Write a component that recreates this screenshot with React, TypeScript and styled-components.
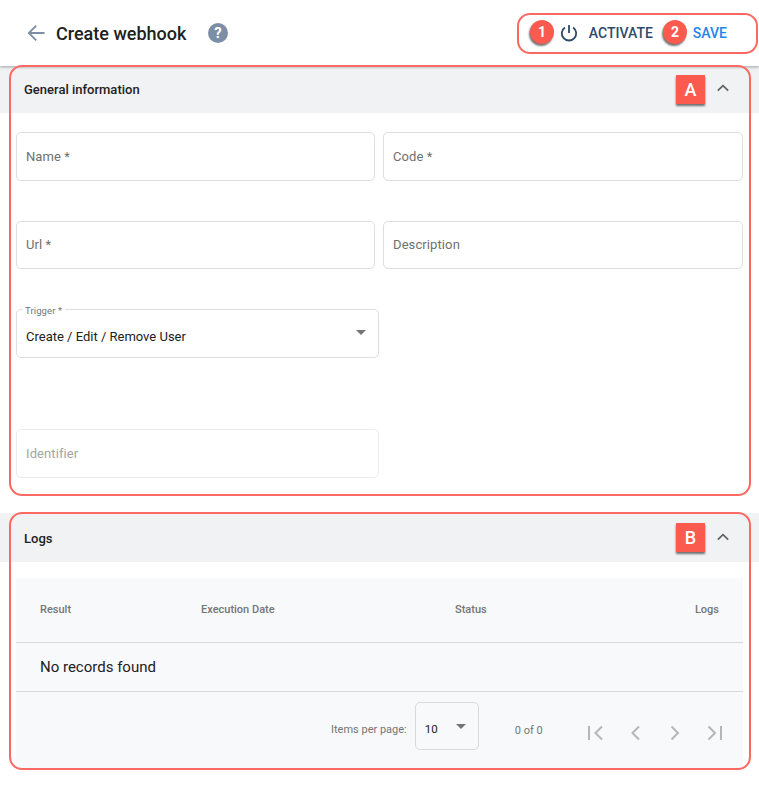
import React from "react";
import styled, { createGlobalStyle } from "styled-components";

const Global = createGlobalStyle`
  html, body { margin: 0; padding: 0; background: #fff; }
  body { font-family: Roboto, "Liberation Sans", sans-serif; }
  * { box-sizing: border-box; }
`;

const Page = styled.div`
  position: relative;
  width: 759px;
  height: 787px;
  overflow: hidden;
`;

const Header = styled.header`
  height: 66px;
  display: flex;
  align-items: center;
  padding: 0 0 0 26px;
  position: relative;
  box-shadow: 0 1px 3px rgba(0, 0, 0, 0.35);
  background: #fff;
  z-index: 1;
`;

const BackIcon = styled.svg`
  width: 20px;
  height: 20px;
  margin-right: 10px;
`;

const Title = styled.h1`
  margin: 0;
  font-size: 18px;
  font-weight: 500;
  color: #212121;
`;

const Help = styled.svg`
  width: 22px;
  height: 22px;
  margin-left: 21px;
`;

const Actions = styled.div`
  margin-left: auto;
  display: flex;
  align-items: center;
  height: 40px;
  padding-right: 32px;
`;

const PowerIcon = styled.svg`
  width: 20px;
  height: 20px;
  margin-right: 10px;
`;

const ActionButton = styled.span<{ $color: string; $gap?: number }>`
  font-size: 14px;
  font-weight: 500;
  color: ${(p) => p.$color};
  margin-left: ${(p) => p.$gap ?? 0}px;
`;

const Panel = styled.section<{ $gap?: number }>`
  margin-top: ${(p) => p.$gap ?? 0}px;
`;

const PanelHead = styled.div<{ $h: number; $pad: string }>`
  height: ${(p) => p.$h}px;
  background: #f1f2f4;
  display: flex;
  align-items: center;
  justify-content: space-between;
  padding: ${(p) => p.$pad};
  font-size: 13px;
  font-weight: 500;
  color: #212121;
`;

const Chevron = styled.svg`
  width: 18px;
  height: 18px;
  margin-top: -2px;
`;

const FormBody = styled.div`
  padding: 19px 16px 0;
`;

const Grid = styled.div`
  display: grid;
  grid-template-columns: 359px 360px;
  column-gap: 8px;
  row-gap: 40px;
`;

const Field = styled.div<{ $disabled?: boolean; $wide?: boolean; $top?: number }>`
  position: relative;
  height: 48.5px;
  width: ${(p) => (p.$wide ? "363px" : "auto")};
  margin-top: ${(p) => p.$top ?? 0}px;
  border: 1px solid ${(p) => (p.$disabled ? "#ececec" : "#dedede")};
  border-radius: 5px;
  display: flex;
  align-items: center;
  padding: 0 9px;
  font-size: 13px;
  letter-spacing: 0.1px;
  color: ${(p) => (p.$disabled ? "#a4a4a4" : "#6f6f6f")};
  background: #fff;
`;

const FloatLabel = styled.span`
  position: absolute;
  left: 5px;
  top: -5px;
  padding: 0 3px;
  background: #fff;
  font-size: 9.5px;
  line-height: 11px;
  color: #757575;
`;

const SelectValue = styled.span`
  color: #212121;
  margin-top: 7px;
  letter-spacing: 0;
`;

const Caret = styled.i`
  position: absolute;
  width: 0;
  height: 0;
  border-left: 5px solid transparent;
  border-right: 5px solid transparent;
  border-top: 5px solid #757575;
`;

const TriggerCaret = styled(Caret)`
  right: 12px;
  top: 20px;
`;

const TableWrap = styled.div`
  margin: 16px 16px 0;
  background: #f8f9fb;
  height: 192px;
`;

const HeadRow = styled.div`
  height: 65px;
  display: grid;
  grid-template-columns: 161px 254px 1fr auto;
  align-items: center;
  padding: 0 24px 2px;
  border-bottom: 1px solid #d8d9dc;
  font-size: 11px;
  font-weight: 500;
  color: #757575;
`;

const EmptyRow = styled.div`
  height: 49px;
  display: flex;
  align-items: center;
  padding: 0 24px;
  border-bottom: 1px solid #d8d9dc;
  font-size: 15px;
  color: #212121;
`;

const Footer = styled.div`
  height: 77px;
  display: flex;
  align-items: center;
  padding-left: 315px;
  font-size: 11px;
  color: #757575;
`;

const PerPage = styled.span`
  margin-right: 8px;
  margin-bottom: 2px;
`;

const PageSelect = styled.div`
  position: relative;
  align-self: flex-start;
  width: 64px;
  height: 48px;
  border: 1px solid #d9d9dc;
  border-radius: 5px;
  display: flex;
  align-items: center;
  padding: 6px 0 0 9px;
  font-size: 11.5px;
  color: #212121;
  margin-top: 10px;
`;

const PageCaret = styled(Caret)`
  left: 40px;
  top: 21px;
`;

const Range = styled.span`
  margin-left: 36px;
  width: 44px;
`;

const Pager = styled.div`
  display: flex;
  align-items: center;
  gap: 16px;
  margin-left: 24px;
  margin-top: 5px;
`;

const PagerIcon = styled.svg`
  width: 24px;
  height: 24px;
`;

const Outline = styled.div<{ $x: number; $y: number; $w: number; $h: number; $r: number }>`
  position: absolute;
  left: ${(p) => p.$x}px;
  top: ${(p) => p.$y}px;
  width: ${(p) => p.$w}px;
  height: ${(p) => p.$h}px;
  border: 2px solid #fb6a62;
  border-radius: ${(p) => p.$r}px;
  pointer-events: none;
  z-index: 2;
`;

const RoundBadge = styled.div<{ $x: number }>`
  position: absolute;
  left: ${(p) => p.$x}px;
  top: 20px;
  width: 24px;
  height: 24px;
  border-radius: 50%;
  background: #fb5a4e;
  color: #fff;
  font-size: 14px;
  font-weight: 700;
  display: flex;
  align-items: center;
  justify-content: center;
  box-shadow: -1px 2px 2px rgba(0, 0, 0, 0.55);
  z-index: 3;
`;

const SquareBadge = styled.div<{ $y: number }>`
  position: absolute;
  left: 676px;
  top: ${(p) => p.$y}px;
  width: 29px;
  height: 29px;
  background: #fb5a4e;
  color: #fff;
  font-size: 18px;
  font-weight: 500;
  display: flex;
  align-items: center;
  justify-content: center;
  box-shadow: 0 2px 2px rgba(0, 0, 0, 0.55);
  z-index: 3;
`;

const ChevronUp = () => (
  <Chevron viewBox="0 0 18 18" fill="none">
    <path d="M3.8 11.6 9 6.6l5.2 5" stroke="#616161" strokeWidth="1.7" />
  </Chevron>
);

const PagerGlyph = ({ d }: { d: string }) => (
  <PagerIcon viewBox="0 0 24 24" fill="none">
    <path d={d} stroke="#b5b6b8" strokeWidth="2" />
  </PagerIcon>
);

export default function App() {
  return (
    <Page>
      <Global />
      <Header>
        <BackIcon viewBox="0 0 20 20" fill="none">
          <path d="M18.5 10H3M10.2 2.6 2.8 10l7.4 7.4" stroke="#7b8ea5" strokeWidth="1.8" />
        </BackIcon>
        <Title>Create webhook</Title>
        <Help viewBox="0 0 22 22">
          <circle cx="11" cy="11" r="10" fill="#7b8ea5" />
          <text x="11" y="16.2" textAnchor="middle" fontSize="15" fontWeight="700" fontFamily="Roboto, sans-serif" fill="#fff">?</text>
        </Help>
        <Actions>
          <PowerIcon viewBox="0 0 20 20" fill="none">
            <path d="M10 2v8" stroke="#2f4a68" strokeWidth="1.8" />
            <path d="M5.9 4.4a7.2 7.2 0 1 0 8.2 0" stroke="#2f4a68" strokeWidth="1.8" />
          </PowerIcon>
          <ActionButton $color="#2f4a68">ACTIVATE</ActionButton>
          <ActionButton $color="#2186ee" $gap={40}>SAVE</ActionButton>
        </Actions>
      </Header>

      <Panel>
        <PanelHead $h={47} $pad="0 27px 1px 24px">
          General information
          <ChevronUp />
        </PanelHead>
        <FormBody>
          <Grid>
            <Field>Name *</Field>
            <Field>Code *</Field>
            <Field>Url *</Field>
            <Field>Description</Field>
          </Grid>
          <Field $wide $top={40}>
            <FloatLabel>Trigger *</FloatLabel>
            <SelectValue>Create / Edit / Remove User</SelectValue>
            <TriggerCaret />
          </Field>
          <Field $wide $disabled $top={71.5}>Identifier</Field>
        </FormBody>
      </Panel>

      <Panel $gap={35.5}>
        <PanelHead $h={49} $pad="1px 27px 0 24px">
          Logs
          <ChevronUp />
        </PanelHead>
        <TableWrap>
          <HeadRow>
            <span>Result</span>
            <span>Execution Date</span>
            <span>Status</span>
            <span>Logs</span>
          </HeadRow>
          <EmptyRow>No records found</EmptyRow>
          <Footer>
            <PerPage>Items per page:</PerPage>
            <PageSelect>
              10
              <PageCaret />
            </PageSelect>
            <Range>0 of 0</Range>
            <Pager>
              <PagerGlyph d="M6 5v14M19 5.500 12.500 12l6.500 6.500" />
              <PagerGlyph d="M16 5.500 9.500 12l6.500 6.500" />
              <PagerGlyph d="m8.500 5.500 6.500 6.500-6.500 6.500" />
              <PagerGlyph d="M18 5v14M5.500 5.500 12 12l-6.500 6.500" />
            </Pager>
          </Footer>
        </TableWrap>
      </Panel>

      <Outline $x={517} $y={12.5} $w={241} $h={41} $r={13} />
      <Outline $x={8.5} $y={65} $w={742} $h={431} $r={13} />
      <Outline $x={8.5} $y={512} $w={742} $h={258} $r={13} />
      <RoundBadge $x={530}>1</RoundBadge>
      <RoundBadge $x={663}>2</RoundBadge>
      <SquareBadge $y={75}>A</SquareBadge>
      <SquareBadge $y={523}>B</SquareBadge>
    </Page>
  );
}
